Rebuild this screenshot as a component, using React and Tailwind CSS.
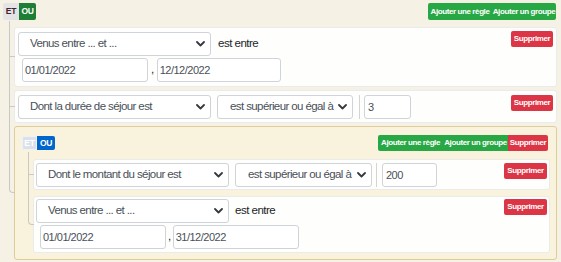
import React from 'react';

const Chevron = () => (
  <svg width="9" height="6" viewBox="0 0 9 6" className="shrink-0">
    <path d="M1 1l3.5 3.5L8 1" stroke="#343a40" strokeWidth="1.8" fill="none" strokeLinecap="round" strokeLinejoin="round" />
  </svg>
);

const Select = ({ label, className }) => (
  <div
    className={`flex items-center justify-between h-[24px] bg-white border border-[#ced4da] rounded-[3px] pl-[11px] pr-[5px] text-[11.5px] tracking-[-0.6px] text-[#495057] ${className}`}
  >
    <span className="whitespace-nowrap">{label}</span>
    <Chevron />
  </div>
);

const Input = ({ value, className }) => (
  <div
    className={`flex items-center h-[24px] bg-white border border-[#ced4da] rounded-[3px] pl-[2px] text-[11px] tracking-[-0.5px] text-[#495057] ${className}`}
  >
    {value}
  </div>
);

const Sep = ({ className }) => <div className={`w-px h-[24px] bg-[#d4d4d4] ${className}`}></div>;

const Remove = ({ className = '' }) => (
  <button className={`h-[16px] w-[42px] bg-[#dc3545] text-white text-[8px] font-bold tracking-[-0.4px] whitespace-nowrap rounded-[2px] flex items-center justify-center ${className}`}>
    Supprimer
  </button>
);

// connector lines, like the ::before / ::after of the query builder list items
const Lines = ({ first, last, firstTop, gap }) => (
  <>
    <span
      className={`absolute left-[-6px] w-[6px] border-l border-b border-[#c8c8c8] ${last ? 'rounded-bl-[4px]' : ''}`}
      style={{ top: -(first ? firstTop : gap), height: `calc(50% + ${first ? firstTop : gap}px)` }}
    ></span>
    {!last && (
      <span
        className="absolute left-[-6px] w-[6px] border-l border-[#c8c8c8]"
        style={{ top: '50%', height: `calc(50% + ${gap}px)` }}
      ></span>
    )}
  </>
);

const RuleBox = ({ children, className = '' }) => (
  <div className={`relative bg-[#fefefc] border border-[#ebebeb] rounded-[3px] flex justify-between items-start ${className}`}>
    {children}
  </div>
);

const Label = ({ children, className = '' }) => (
  <span className={`text-[11.5px] tracking-[-0.5px] text-[#212529] whitespace-nowrap ${className}`}>{children}</span>
);

const App = () => {
  return (
    <div className="w-[561px] h-[262px] overflow-hidden bg-[#f5f1e4] pt-[3px] pl-[3px] pr-[4px] font-['Liberation_Sans',Arial,sans-serif]">
      {/* root group header */}
      <div className="flex justify-between items-start">
        <div className="flex h-[17px] text-[8.5px] font-bold tracking-[-0.3px]">
          <button className="w-[16px] bg-[#e4e4e4] text-[#3d2330] rounded-l-[2px] flex items-center justify-center">ET</button>
          <button className="w-[17px] bg-[#1e7e34] text-white rounded-r-[2px] flex items-center justify-center">OU</button>
        </div>
        <div className="flex h-[17px] mr-px bg-[#28a745] rounded-[2px] text-white text-[8px] font-bold tracking-[-0.4px] whitespace-nowrap">
          <button className="w-[64px] flex items-center justify-center">Ajouter une règle</button>
          <button className="w-[64px] flex items-center justify-center">Ajouter un groupe</button>
        </div>
      </div>

      {/* root rules */}
      <div className="ml-[11px] mt-[7px] flex flex-col gap-[3px]">
        <RuleBox className="pl-[3px] pr-[3px] pt-[3px] pb-[4px]">
          <Lines first firstTop={7} gap={3} />
          <div className="flex flex-col">
            <div className="flex items-center mt-px">
              <Select label="Venus entre ... et ..." className="w-[193px] h-[23px]" />
              <Label className="ml-[7px]">est entre</Label>
            </div>
            <div className="flex items-center mt-[2px] ml-[4px]">
              <Input value="01/01/2022" className="w-[126px] h-[23px]" />
              <Label className="mx-[3px]">,</Label>
              <Input value="12/12/2022" className="w-[124px] h-[23px]" />
            </div>
          </div>
          <Remove />
        </RuleBox>

        <RuleBox className="pl-[3px] pr-[3px] pt-[3px] pb-[3px]">
          <Lines gap={3} />
          <div className="flex items-center mt-px">
            <Select label="Dont la durée de séjour est" className="w-[193px]" />
            <Select label="est supérieur ou égal à" className="w-[136px] ml-[6px] pl-[12px]" />
            <Sep className="ml-[6px] mr-[4px]" />
            <Input value="3" className="w-[47px] pl-[3px]" />
          </div>
          <Remove className="mt-px" />
        </RuleBox>

        {/* nested group */}
        <div className="relative bg-[#f9f2dc] border border-[#dfcc98] rounded-[3px] pt-[8px] pl-[7px] pr-[6px] pb-[6px]">
          <Lines last gap={3} />
          <div className="flex justify-between items-start">
            <div className="flex h-[14px] mt-px text-[8.5px] font-bold tracking-[-0.3px] text-white">
              <button className="w-[15px] bg-[#dae1ea] border border-[#eef2f6] rounded-l-[2px] flex items-center justify-center">ET</button>
              <button className="w-[18px] bg-[#0066cc] rounded-r-[2px] flex items-center justify-center">OU</button>
            </div>
            <div className="flex h-[16px] mr-[2px] rounded-[2px] overflow-hidden text-white text-[8px] font-bold tracking-[-0.4px] whitespace-nowrap">
              <button className="w-[65px] bg-[#28a745] flex items-center justify-center">Ajouter une règle</button>
              <button className="w-[65px] bg-[#28a745] flex items-center justify-center">Ajouter un groupe</button>
              <button className="w-[40px] bg-[#dc3545] flex items-center justify-center">Supprimer</button>
            </div>
          </div>

          <div className="ml-[11px] mt-[8px] flex flex-col gap-[6px]">
            <RuleBox className="pl-[2px] pr-[2px] pt-[3px] pb-[2px]">
              <Lines first firstTop={8} gap={6} />
              <div className="flex items-center">
                <Select label="Dont le montant du séjour est" className="w-[193px]" />
                <Select label="est supérieur ou égal à" className="w-[137px] ml-[6px] pl-[12px]" />
                <Sep className="ml-[4px] mr-[5px]" />
                <Input value="200" className="w-[55px] pl-[3px]" />
              </div>
              <Remove className="w-[43px]" />
            </RuleBox>

            <RuleBox className="pl-[2px] pr-[2px] pt-[2px] pb-[3px]">
              <Lines last gap={6} />
              <div className="flex flex-col">
                <div className="flex items-center">
                  <Select label="Venus entre ... et ..." className="w-[193px]" />
                  <Label className="ml-[6px]">est entre</Label>
                </div>
                <div className="flex items-center mt-[2px] ml-[4px]">
                  <Input value="01/01/2022" className="w-[126px]" />
                  <Label className="mx-[2px]">,</Label>
                  <Input value="31/12/2022" className="w-[126px]" />
                </div>
              </div>
              <Remove className="w-[43px]" />
            </RuleBox>
          </div>
        </div>
      </div>
    </div>
  );
};

export default App;
